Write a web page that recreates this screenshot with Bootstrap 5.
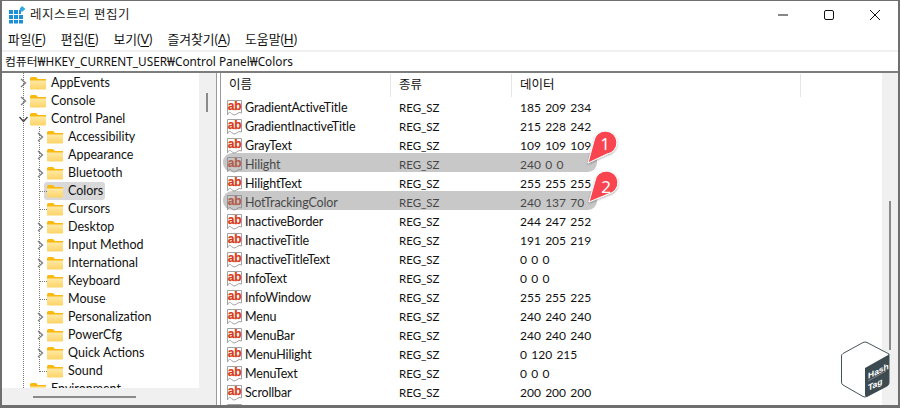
<!DOCTYPE html>
<html lang="ko"><head><meta charset="utf-8"><title>레지스트리 편집기</title>
<link href="https://cdn.jsdelivr.net/npm/bootstrap@5.3.0/dist/css/bootstrap.min.css" rel="stylesheet">
<style>
html,body{margin:0;width:900px;height:408px;overflow:hidden;background:#fff}
body{font:12.5px/18px Lato,"Noto Sans CJK KR",sans-serif;color:#111}
.regwin{width:900px;height:408px;border:solid #6f6f6f;border-width:1px 2px 3px 2px;position:relative;overflow:hidden}
.titlebar{height:27px;padding-left:6px;gap:4px;font-size:12.5px;letter-spacing:.55px;color:#222}
.capbtns{margin-left:auto;gap:0}
.capbtn{width:46px;height:27px;display:flex;align-items:center;justify-content:center}
.menubar{height:22px;padding-left:6px;gap:15px;font-size:12.8px}
.menubar u{text-underline-offset:2px}
.addrbar{height:21px;border-top:2px solid #f0f0f0;padding-left:3px;border-bottom:0;font:11.8px/18px "Noto Sans","Noto Sans CJK KR",sans-serif;white-space:nowrap}
.panes{height:334px;border-top:2px solid #7d7d7d}
.treepane{width:215px;position:relative;overflow:hidden;flex:none;border-right:1px solid #9a9a9a}
.treerows{width:197px;height:315px;overflow:hidden;position:relative;padding-top:1px}
.treerow{height:18px;display:flex;align-items:center;white-space:nowrap;position:relative}
.lv1{padding-left:17px}.lv2{padding-left:34px}
.chev{width:9px;height:10px;flex:none;margin-right:2px}
.nochev{width:9px;height:1px;flex:none;margin-right:2px}
.fold{width:16px;height:14px;flex:none;margin-right:5px}
.treelbl{padding:0;line-height:18px}
.sel{position:absolute;left:42px;top:0;width:61px;height:18px;background:#d9d9d9;border-radius:3px}
.treerow>*{position:relative}
.treerow>.sel{position:absolute}
.vguide{position:absolute;border-left:1px dotted #777;width:0}
.hguide{position:absolute;border-top:1px dotted #777;height:0;left:37px;width:8px;top:9px}
.vbar1{position:absolute;right:0;top:0;bottom:0;width:17px;background:#f0f0f0}
.vthumb1{position:absolute;left:7px;top:20px;width:2px;height:19px;background:#8a8a8a}
.hbar1{position:absolute;left:0;right:0;bottom:0;height:17px;background:#f0f0f0}
.hthumb1{position:absolute;left:31px;top:8px;width:103px;height:2px;background:#8a8a8a}
.splitgap{width:3px;flex:none}
.listpane{flex:1;position:relative;overflow:hidden;border-left:1px solid #9a9a9a}
.lhead{height:25px;position:relative;font-size:12.5px;line-height:24px}
.lrow{height:19px;display:flex;align-items:center;white-space:nowrap}
.c-name{width:178px;flex:none;display:flex;align-items:center;padding-left:5px;letter-spacing:-.15px}
.c-type{width:121px;flex:none;font-size:11.5px}
.c-data{flex:1;font-size:12px;word-spacing:1.2px}
.abic{width:17px;height:17px;flex:none;margin-right:2px}
.lhead span{position:absolute;top:0}
.lhead i{position:absolute;top:1px;width:1px;height:23px;background:#e5e5e5}
.vbar2{position:absolute;right:0;top:0;bottom:0;width:16px;background:#f0f0f0}
.vthumb2{position:absolute;left:7px;top:128px;width:2px;height:149px;background:#8a8a8a}
.hilite{position:absolute;left:2px;width:374px;height:19px;background:rgba(133,133,133,.45);border-radius:9px 0 9px 9px}
.annot{position:absolute;left:575px;top:127px}
.hashlogo{position:absolute;left:836px;top:338px}
</style></head><body>
<svg width="0" height="0" class="position-absolute">
<defs>
<linearGradient id="fg" x1="0" y1="0" x2="0" y2="1"><stop offset="0" stop-color="#ffe9a6"/><stop offset="1" stop-color="#fdd365"/></linearGradient>
<symbol id="folder" viewBox="0 0 16 14"><path d="M0 2.500Q0 1 1.500 1H6L8 3H16V13H1Q0 13 0 12Z" fill="#f9b90f"/><path d="M0 4.500H16V12.500Q16 13.500 15 13.500H1Q0 13.500 0 12.500Z" fill="url(#fg)"/></symbol>
<symbol id="cr" viewBox="0 0 9 10"><path d="M2 1L6.500 5L2 9" fill="none" stroke="#7f7f7f" stroke-width="1.400"/></symbol>
<symbol id="cd" viewBox="0 0 9 10"><path d="M0.500 3L4.500 7.500L8.500 3" fill="none" stroke="#444" stroke-width="1.400"/></symbol>
<symbol id="ab" viewBox="0 0 17 17"><path d="M1.500 1.500H15.500V14Q13 12.500 10.500 15T5.500 14.500T1.500 16Z" fill="#fff" stroke="#a3a3a3" stroke-width="1"/><text x="8.500" y="11" text-anchor="middle" font-family="Liberation Sans" font-weight="700" font-size="12" fill="#d63c1b" stroke="#d63c1b" stroke-width=".25">ab</text></symbol>
</defs></svg>
<div class="regwin d-flex flex-column">
 <div class="titlebar d-flex align-items-center">
  <svg width="18" height="18" viewBox="0 0 18 18" class="flex-none"><g fill="#1c8fd6"><rect x="1" y="4" width="4" height="4"/><rect x="6" y="4" width="4" height="4"/><rect x="11" y="4" width="2" height="4"/><rect x="1" y="9" width="4" height="4"/><rect x="6" y="9" width="4" height="4"/><rect x="11" y="9" width="4" height="4"/><rect x="1" y="14" width="4" height="3.500"/><rect x="6" y="14" width="4" height="3.500"/><rect x="11" y="14" width="4" height="3.500"/></g><path d="M14 0L17.500 3L14 6L11.500 3Z" fill="#35a7e0"/></svg>
  <span>레지스트리 편집기</span>
  <div class="capbtns d-flex">
   <div class="capbtn"><svg width="12" height="12"><path d="M1 6H11" stroke="#111"/></svg></div>
   <div class="capbtn"><svg width="12" height="12"><rect x="1.500" y="1.500" width="9" height="9" rx="1.500" fill="none" stroke="#111"/></svg></div>
   <div class="capbtn"><svg width="12" height="12"><path d="M1 1L11 11M11 1L1 11" stroke="#111"/></svg></div>
  </div>
 </div>
 <div class="menubar d-flex align-items-center">
  <span>파일(<u>F</u>)</span><span>편집(<u>E</u>)</span><span>보기(<u>V</u>)</span><span>즐겨찾기(<u>A</u>)</span><span>도움말(<u>H</u>)</span>
 </div>
 <div class="addrbar">컴퓨터₩HKEY_CURRENT_USER₩Control Panel₩Colors</div>
 <div class="panes d-flex">
  <div class="treepane">
   <div class="treerows">
    <div class="vguide" style="left:21px;top:0;height:315px"></div>
    <div class="vguide" style="left:37px;top:54px;height:243px"></div>
    <div class="treerow lv1"><svg class="chev"><use href="#cr"/></svg><svg class="fold"><use href="#folder"/></svg><span class="treelbl">AppEvents</span></div>
    <div class="treerow lv1"><svg class="chev"><use href="#cr"/></svg><svg class="fold"><use href="#folder"/></svg><span class="treelbl">Console</span></div>
    <div class="treerow lv1"><svg class="chev"><use href="#cd"/></svg><svg class="fold"><use href="#folder"/></svg><span class="treelbl">Control Panel</span></div>
    <div class="treerow lv2"><svg class="chev"><use href="#cr"/></svg><svg class="fold"><use href="#folder"/></svg><span class="treelbl">Accessibility</span></div>
    <div class="treerow lv2"><svg class="chev"><use href="#cr"/></svg><svg class="fold"><use href="#folder"/></svg><span class="treelbl">Appearance</span></div>
    <div class="treerow lv2"><svg class="chev"><use href="#cr"/></svg><svg class="fold"><use href="#folder"/></svg><span class="treelbl">Bluetooth</span></div>
    <div class="treerow lv2"><span class="sel"></span><i class="hguide"></i><span class="nochev"></span><svg class="fold"><use href="#folder"/></svg><span class="treelbl">Colors</span></div>
    <div class="treerow lv2"><i class="hguide"></i><span class="nochev"></span><svg class="fold"><use href="#folder"/></svg><span class="treelbl">Cursors</span></div>
    <div class="treerow lv2"><svg class="chev"><use href="#cr"/></svg><svg class="fold"><use href="#folder"/></svg><span class="treelbl">Desktop</span></div>
    <div class="treerow lv2"><svg class="chev"><use href="#cr"/></svg><svg class="fold"><use href="#folder"/></svg><span class="treelbl">Input Method</span></div>
    <div class="treerow lv2"><svg class="chev"><use href="#cr"/></svg><svg class="fold"><use href="#folder"/></svg><span class="treelbl">International</span></div>
    <div class="treerow lv2"><i class="hguide"></i><span class="nochev"></span><svg class="fold"><use href="#folder"/></svg><span class="treelbl">Keyboard</span></div>
    <div class="treerow lv2"><i class="hguide"></i><span class="nochev"></span><svg class="fold"><use href="#folder"/></svg><span class="treelbl">Mouse</span></div>
    <div class="treerow lv2"><svg class="chev"><use href="#cr"/></svg><svg class="fold"><use href="#folder"/></svg><span class="treelbl">Personalization</span></div>
    <div class="treerow lv2"><svg class="chev"><use href="#cr"/></svg><svg class="fold"><use href="#folder"/></svg><span class="treelbl">PowerCfg</span></div>
    <div class="treerow lv2"><svg class="chev"><use href="#cr"/></svg><svg class="fold"><use href="#folder"/></svg><span class="treelbl">Quick Actions</span></div>
    <div class="treerow lv2"><i class="hguide"></i><span class="nochev"></span><svg class="fold"><use href="#folder"/></svg><span class="treelbl">Sound</span></div>
    <div class="treerow lv1"><span class="nochev"></span><svg class="fold"><use href="#folder"/></svg><span class="treelbl">Environment</span></div>
   </div>
   <div class="vbar1"><div class="vthumb1"></div></div>
   <div class="hbar1"><div class="hthumb1"></div></div>
  </div>
  <div class="splitgap"></div>
  <div class="listpane">
   <div class="lhead"><span style="left:8px">이름</span><i style="left:169px"></i><span style="left:178px">종류</span><i style="left:290px"></i><span style="left:299px">데이터</span><i style="left:579px"></i></div>
   <div class="lrow"><div class="c-name"><svg class="abic"><use href="#ab"/></svg>GradientActiveTitle</div><div class="c-type">REG_SZ</div><div class="c-data">185 209 234</div></div>
   <div class="lrow"><div class="c-name"><svg class="abic"><use href="#ab"/></svg>GradientInactiveTitle</div><div class="c-type">REG_SZ</div><div class="c-data">215 228 242</div></div>
   <div class="lrow"><div class="c-name"><svg class="abic"><use href="#ab"/></svg>GrayText</div><div class="c-type">REG_SZ</div><div class="c-data">109 109 109</div></div>
   <div class="lrow"><div class="c-name"><svg class="abic"><use href="#ab"/></svg>Hilight</div><div class="c-type">REG_SZ</div><div class="c-data">240 0 0</div></div>
   <div class="lrow"><div class="c-name"><svg class="abic"><use href="#ab"/></svg>HilightText</div><div class="c-type">REG_SZ</div><div class="c-data">255 255 255</div></div>
   <div class="lrow"><div class="c-name"><svg class="abic"><use href="#ab"/></svg>HotTrackingColor</div><div class="c-type">REG_SZ</div><div class="c-data">240 137 70</div></div>
   <div class="lrow"><div class="c-name"><svg class="abic"><use href="#ab"/></svg>InactiveBorder</div><div class="c-type">REG_SZ</div><div class="c-data">244 247 252</div></div>
   <div class="lrow"><div class="c-name"><svg class="abic"><use href="#ab"/></svg>InactiveTitle</div><div class="c-type">REG_SZ</div><div class="c-data">191 205 219</div></div>
   <div class="lrow"><div class="c-name"><svg class="abic"><use href="#ab"/></svg>InactiveTitleText</div><div class="c-type">REG_SZ</div><div class="c-data">0 0 0</div></div>
   <div class="lrow"><div class="c-name"><svg class="abic"><use href="#ab"/></svg>InfoText</div><div class="c-type">REG_SZ</div><div class="c-data">0 0 0</div></div>
   <div class="lrow"><div class="c-name"><svg class="abic"><use href="#ab"/></svg>InfoWindow</div><div class="c-type">REG_SZ</div><div class="c-data">255 255 225</div></div>
   <div class="lrow"><div class="c-name"><svg class="abic"><use href="#ab"/></svg>Menu</div><div class="c-type">REG_SZ</div><div class="c-data">240 240 240</div></div>
   <div class="lrow"><div class="c-name"><svg class="abic"><use href="#ab"/></svg>MenuBar</div><div class="c-type">REG_SZ</div><div class="c-data">240 240 240</div></div>
   <div class="lrow"><div class="c-name"><svg class="abic"><use href="#ab"/></svg>MenuHilight</div><div class="c-type">REG_SZ</div><div class="c-data">0 120 215</div></div>
   <div class="lrow"><div class="c-name"><svg class="abic"><use href="#ab"/></svg>MenuText</div><div class="c-type">REG_SZ</div><div class="c-data">0 0 0</div></div>
   <div class="lrow"><div class="c-name"><svg class="abic"><use href="#ab"/></svg>Scrollbar</div><div class="c-type">REG_SZ</div><div class="c-data">200 200 200</div></div>
   <div class="lrow"><div class="c-name"><svg class="abic"><use href="#ab"/></svg>TitleText</div><div class="c-type">REG_SZ</div><div class="c-data">0 0 0</div></div>
   <div class="hilite" style="top:80px"></div>
   <div class="hilite" style="top:118px"></div>
   <div class="vbar2"><div class="vthumb2"></div></div>
  </div>
 </div>
 <svg class="annot" width="50" height="86" viewBox="0 0 50 86">
  <defs><filter id="sh" x="-30%" y="-30%" width="160%" height="160%"><feDropShadow dx="0" dy="1" stdDeviation="1" flood-color="#000" flood-opacity=".35"/></filter></defs>
  <g filter="url(#sh)" fill="#f8454f" stroke="#fff" stroke-width="1" stroke-linejoin="round"><path d="M11 35L17 13A11.500 11.500 0 1 1 30 26Z"/><path d="M12 74L18 53A11.500 11.500 0 1 1 31 66Z"/></g>
  <text x="28" y="22" text-anchor="middle" font-family="Noto Sans" font-size="17" fill="#fff">1</text>
  <text x="29" y="65" text-anchor="middle" font-family="Noto Sans" font-size="17" fill="#fff">2</text>
 </svg>
 <svg class="hashlogo" width="54" height="62" viewBox="0 0 54 62">
  <path d="M25 3.500Q27 2.500 29 3.500L51 15V44Q51 46 49 47L29 57.500Q27 58.500 25 57.500L5 46Q3.500 45 3.500 43V17Q3.500 15.500 5 14.500Z" fill="#fff" stroke="#46545a" stroke-width="1"/>
  <path d="M27 29L51 15.500V44Q51 46 49 47L29 57.500Q27 58 27 56Z" fill="#3d4a50"/>
  <g fill="#fff" font-family="Liberation Sans" font-weight="700" font-size="8.5">
   <text transform="matrix(1 -.5 0 1 30 40)">Hash</text>
   <path d="M30 42L48 32" stroke="#aab" stroke-width=".6"/>
   <text transform="matrix(1 -.5 0 1 30 52)">Tag</text>
  </g>
 </svg>
</div>
<script src="https://cdn.jsdelivr.net/npm/bootstrap@5.3.0/dist/js/bootstrap.bundle.min.js"></script>
</body></html>
